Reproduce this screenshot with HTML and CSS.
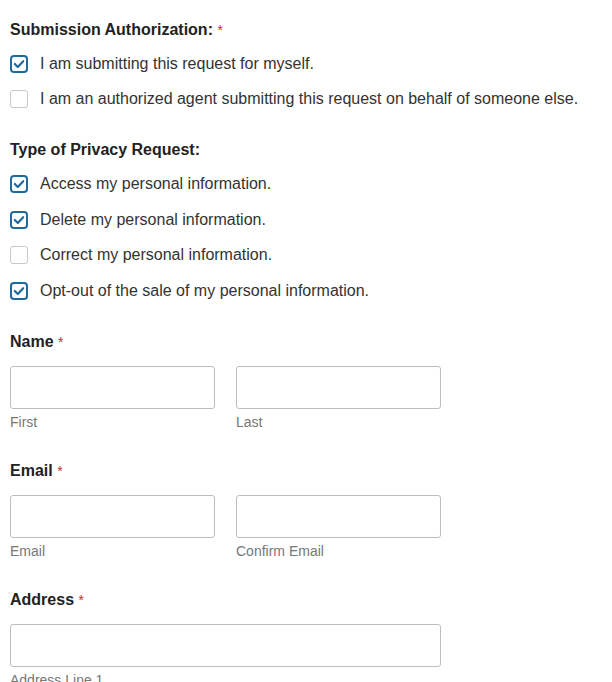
FILE: index.html
```html
<!DOCTYPE html>
<html lang="en">
<head>
<meta charset="utf-8">
<title>Privacy Request</title>
<link rel="stylesheet" href="styles.css">
</head>
<body>
<form class="form">
  <div class="group-title">Submission Authorization: <span class="req">*</span></div>
  <ul class="checks">
    <li class="check"><span class="box on"><svg viewBox="0 0 14 14"><path d="M2.8 7 L5.8 10 L11.2 4.2"/></svg></span>I am submitting this request for myself.</li>
    <li class="check"><span class="box"></span>I am an authorized agent submitting this request on behalf of someone else.</li>
  </ul>

  <div class="group-title sec">Type of Privacy Request:</div>
  <ul class="checks">
    <li class="check"><span class="box on"><svg viewBox="0 0 14 14"><path d="M2.8 7 L5.8 10 L11.2 4.2"/></svg></span>Access my personal information.</li>
    <li class="check"><span class="box on"><svg viewBox="0 0 14 14"><path d="M2.8 7 L5.8 10 L11.2 4.2"/></svg></span>Delete my personal information.</li>
    <li class="check"><span class="box"></span>Correct my personal information.</li>
    <li class="check"><span class="box on"><svg viewBox="0 0 14 14"><path d="M2.8 7 L5.8 10 L11.2 4.2"/></svg></span>Opt-out of the sale of my personal information.</li>
  </ul>

  <div class="field-title sec">Name <span class="req">*</span></div>
  <div class="pair">
    <div class="sub"><div class="input"></div><div class="sublabel">First</div></div>
    <div class="sub"><div class="input"></div><div class="sublabel">Last</div></div>
  </div>

  <div class="field-title sec2">Email <span class="req">*</span></div>
  <div class="pair">
    <div class="sub"><div class="input"></div><div class="sublabel">Email</div></div>
    <div class="sub"><div class="input"></div><div class="sublabel">Confirm Email</div></div>
  </div>

  <div class="field-title sec2">Address <span class="req">*</span></div>
  <div class="single">
    <div class="input"></div><div class="sublabel">Address Line 1</div>
  </div>
</form>
</body>
</html>
```

FILE: styles.css
```css
html, body {
  margin: 0;
  padding: 0;
  background: #ffffff;
}
body {
  font-family: "Liberation Sans", Arial, sans-serif;
  color: #333333;
  overflow: hidden;
}
.form {
  padding: 20px 10px 0 10px;
}
.group-title,
.field-title {
  font-size: 16px;
  font-weight: bold;
  line-height: 20px;
  color: #222222;
}
.req {
  color: #c23030;
  font-weight: normal;
  font-size: 14px;
}
.sec {
  margin-top: 23px;
}
.sec2 {
  margin-top: 31px;
}
.checks {
  list-style: none;
  margin: 6px 0 0 0;
  padding: 0;
}
.check {
  display: flex;
  align-items: center;
  height: 35.6px;
  font-size: 16px;
  color: #333333;
  white-space: nowrap;
}
.box {
  box-sizing: border-box;
  width: 18px;
  height: 18px;
  border: 1px solid #c8c8c8;
  border-radius: 3px;
  margin-right: 12px;
  flex: none;
  display: flex;
  align-items: center;
  justify-content: center;
  background: #fff;
}
.box.on {
  border: 2px solid #1f6a9c;
  border-radius: 4px;
}
.box svg {
  width: 14px;
  height: 14px;
  fill: none;
  stroke: #1f6a9c;
  stroke-width: 2.2;
  stroke-linecap: round;
  stroke-linejoin: round;
}
.pair {
  display: flex;
  gap: 21px;
  margin-top: 14px;
}
.sub {
  width: 205px;
}
.single {
  width: 431px;
  margin-top: 14px;
}
.input {
  box-sizing: border-box;
  height: 43px;
  border: 1px solid #bdbdbd;
  border-radius: 3px;
  background: #fff;
}
.sublabel {
  margin-top: 5px;
  font-size: 14px;
  line-height: 16px;
  color: #777777;
}
```
